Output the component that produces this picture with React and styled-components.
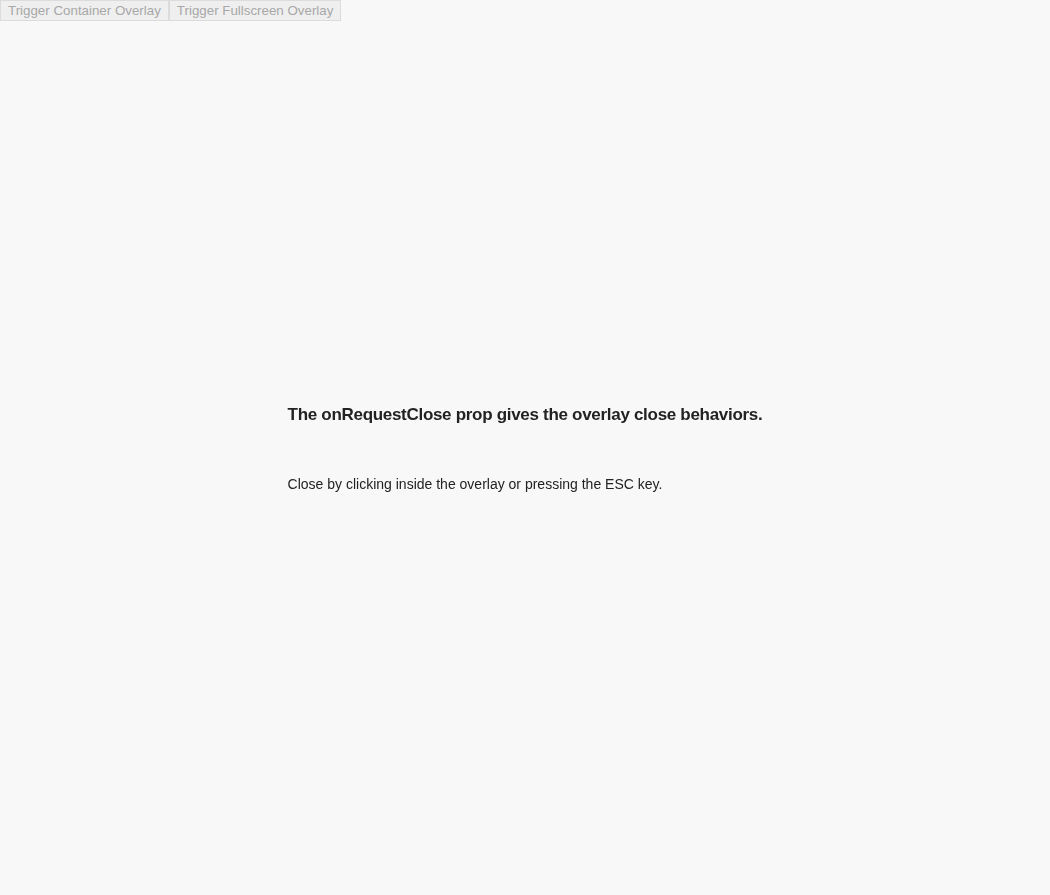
import React from "react";
import styled, { createGlobalStyle } from "styled-components";

const GlobalStyle = createGlobalStyle`
  html, body {
    margin: 0;
    padding: 0;
    background: #f8f8f8;
    font-family: "Liberation Sans", Arial, sans-serif;
  }
`;

const Toolbar = styled.div`
  display: flex;
  gap: 0;
  position: relative;
  z-index: 2;
`;

const TriggerButton = styled.button`
  font-family: "Liberation Sans", Arial, sans-serif;
  font-size: 13.333px;
  line-height: 15px;
  height: 21px;
  padding: 2px 7px;
  margin: 0;
  color: #a8a8a8;
  background: #efefef;
  border: 1px solid #dcdcdc;
  border-radius: 0;
  cursor: default;
`;

const Overlay = styled.div`
  position: fixed;
  inset: 0;
  padding-top: 2px;
  display: flex;
  align-items: center;
  justify-content: center;
  z-index: 1;
`;

const Content = styled.div`
  color: #222;
`;

const Heading = styled.h2`
  margin: 0 0 49px;
  font-size: 17px;
  letter-spacing: -0.3px;
  line-height: 22px;
  font-weight: bold;
`;

const Body = styled.p`
  margin: 0;
  font-size: 14px;
  line-height: 18px;
`;

export default function App() {
  return (
    <>
      <GlobalStyle />
      <Toolbar>
        <TriggerButton disabled>Trigger Container Overlay</TriggerButton>
        <TriggerButton disabled>Trigger Fullscreen Overlay</TriggerButton>
      </Toolbar>
      <Overlay>
        <Content>
          <Heading>The onRequestClose prop gives the overlay close behaviors.</Heading>
          <Body>Close by clicking inside the overlay or pressing the ESC key.</Body>
        </Content>
      </Overlay>
    </>
  );
}
